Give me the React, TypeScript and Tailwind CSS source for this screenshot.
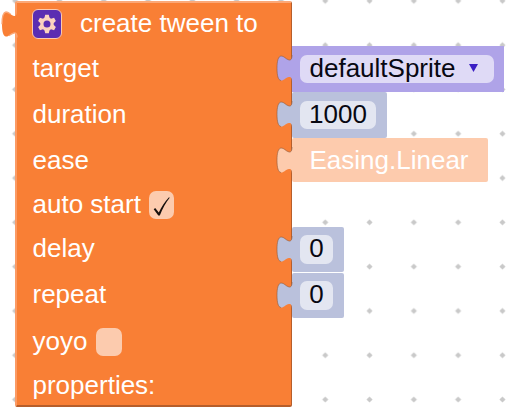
import type { ReactNode } from "react";

function Tab({ className }: { className: string }) {
  return (
    <svg viewBox="-16 7 17 31" className={`absolute top-[7px] -left-[16px] h-[31px] w-[17px] ${className}`}>
      <path d="M1 9H0C0 12.6-.9 14.4-3 14C-6.5 13-8 9.8-11 10C-13.8 10.4-15 15-15 22.3C-15 29.6-13.8 34.2-11 34.5C-8 34.7-6.5 31.6-3 31C-.9 30.6 0 32.2 0 35.5h1z" fill="currentColor" />
      <path d="M0 9C0 12.6-.9 14.4-3 14C-6.5 13-8 9.8-11 10C-13.8 10.4-15 15-15 22.3C-15 29.6-13.8 34.2-11 34.5" fill="none" stroke="#8f5a3c" strokeOpacity="0.6" strokeWidth="1" />
    </svg>
  );
}

function Row({ label, height, labelPad = "pt-[7px]", children, value }: { label: string; height: string; labelPad?: string; children?: ReactNode; value?: ReactNode }) {
  return (
    <div className={`flex ${height}`}>
      <div className={`flex w-[277px] shrink-0 items-start pl-[17.5px] text-white ${labelPad}`}>
        <span>{label}</span>
        {children}
      </div>
      {value}
    </div>
  );
}

function NumberBlock({ value, width }: { value: string; width: string }) {
  return (
    <div className={`relative h-[45.5px] ${width} rounded-[2px] bg-[#bac1dc] pt-[8.5px] pl-[8px] text-[#080812]`}>
      <Tab className="text-[#bac1dc]" />
      <div className="mr-[10.5px] flex h-[28.5px] items-center justify-center rounded-[7px] bg-[#e3e6f1] pb-[2px]">{value}</div>
    </div>
  );
}

export default function App() {
  return (
    <main className="relative h-[408px] w-[506px] overflow-hidden bg-white font-['Liberation_Sans',Arial,sans-serif] text-[26px] leading-[30px]">
      <svg className="absolute inset-0 h-full w-full">
        <defs>
          <pattern id="grid" x="-7" y="-21.3" width="44.3" height="44.3" patternUnits="userSpaceOnUse">
            <path d="M22.15 19.1l3.05 3.05-3.05 3.05-3.05-3.05z" fill="#c9c9c9" />
          </pattern>
        </defs>
        <rect width="506" height="408" fill="url(#grid)" />
      </svg>
      <div className="relative ml-[15px] w-[491px] pt-[1px]">
        <div className="absolute top-[1px] left-0 h-[406px] w-[277px] rounded-[2px] border-t-2 border-r border-b-2 border-l-2 border-t-[#fba878] border-r-[#b65e2b] border-b-[#b65e2b] border-l-[#fb9b65] bg-[#f97f35]" />
        <svg viewBox="-16 7 19 31" className="absolute top-[8.5px] -left-[14.5px] h-[31px] w-[19px]">
          <path d="M3 9H0C0 12.6-.9 14.4-3 14C-6.5 13-8 9.8-11 10C-13.8 10.4-15 15-15 22.3C-15 29.6-13.8 34.2-11 34.5C-8 34.7-6.5 31.6-3 31C-.9 30.6 0 32.2 0 35.5h3z" fill="#f97f35" />
          <path d="M-6.5 12C-8 11-9.5 10-11 10C-13.8 10.4-15 15-15 22.3M-8 33.7C-6.2 32.6-5 31.4-3 31C-.9 30.6 0 32.2 0 35.5" fill="none" stroke="#fba878" strokeWidth="1.3" />
        </svg>
        <div className="relative">
          <div className="flex h-[45px] items-start pt-[7px] pl-[17px] text-white">
            <div className="mt-[1px] flex h-[30px] w-[30px] items-center justify-center rounded-[6px] border-[1.5px] border-[#fcc9ad] bg-[#5b2db2]">
              <svg viewBox="-10 -10 20 20" className="h-[20px] w-[20px]" fill="#fcd3bf">
                <circle r="5.1" fill="none" stroke="#fcd3bf" strokeWidth="3.2" />
                <path id="tooth" d="M-1.8-9.2h3.6l.9 3.8h-5.4zM-1.8 9.2h3.6l.9-3.8h-5.4z" />
                <use href="#tooth" transform="rotate(60)" />
                <use href="#tooth" transform="rotate(120)" />
              </svg>
            </div>
            <span className="ml-[18px]">create tween to</span>
          </div>
          <Row label="target" height="h-[46px]" value={
            <div className="relative h-[45.5px] w-[212px] bg-[#afa3e8] pt-[8.5px] pl-[8px] text-[#080812]">
              <Tab className="text-[#afa3e8]" />
              <div className="flex h-[28.5px] w-[194px] items-center rounded-[7px] bg-[#dfdaf6] pb-[2px] pl-[9.5px]">
                <span>defaultSprite</span>
                <svg viewBox="0 0 9 8" className="ml-[14px] h-[8px] w-[9px]">
                  <path d="M0 0h9L4.5 8z" fill="#3c1fc4" />
                </svg>
              </div>
            </div>
          } />
          <Row label="duration" height="h-[46px]" value={<NumberBlock value="1000" width="w-[94.5px]" />} />
          <Row label="ease" height="h-[44px]" value={
            <div className="relative h-[44px] w-[196px] rounded-[2px] bg-[#fdcbad] pt-[7px] pl-[17.5px] text-white">
              <Tab className="text-[#fdcbad]" />
              Easing.Linear
            </div>
          } />
          <Row label="auto start" height="h-[44.5px]">
            <span className="mt-[2px] ml-[8px] flex h-[28px] w-[25.5px] items-center justify-center rounded-[7px] bg-[#fccbae] pt-[2px]">
              <svg viewBox="0 0 17 19" className="h-[19px] w-[17px]">
                <path d="M.7 12.2l1.5-1.1 3.6 4.5C8.4 10 11.7 4.4 16 .2l.7.5C12.9 5.5 9.5 11.5 6.8 18.4l-1.5.2z" fill="#17100d" />
              </svg>
            </span>
          </Row>
          <Row label="delay" height="h-[46px]" labelPad="pt-[6px]" value={<NumberBlock value="0" width="w-[51.5px]" />} />
          <Row label="repeat" height="h-[46px]" labelPad="pt-[6px]" value={<NumberBlock value="0" width="w-[51.5px]" />} />
          <Row label="yoyo" height="h-[44.5px]">
            <span className="mt-[2px] ml-[9px] h-[28px] w-[25.5px] rounded-[7px] bg-[#fccbae]" />
          </Row>
          <Row label="properties:" height="h-[44px]" />
        </div>
      </div>
    </main>
  );
}
